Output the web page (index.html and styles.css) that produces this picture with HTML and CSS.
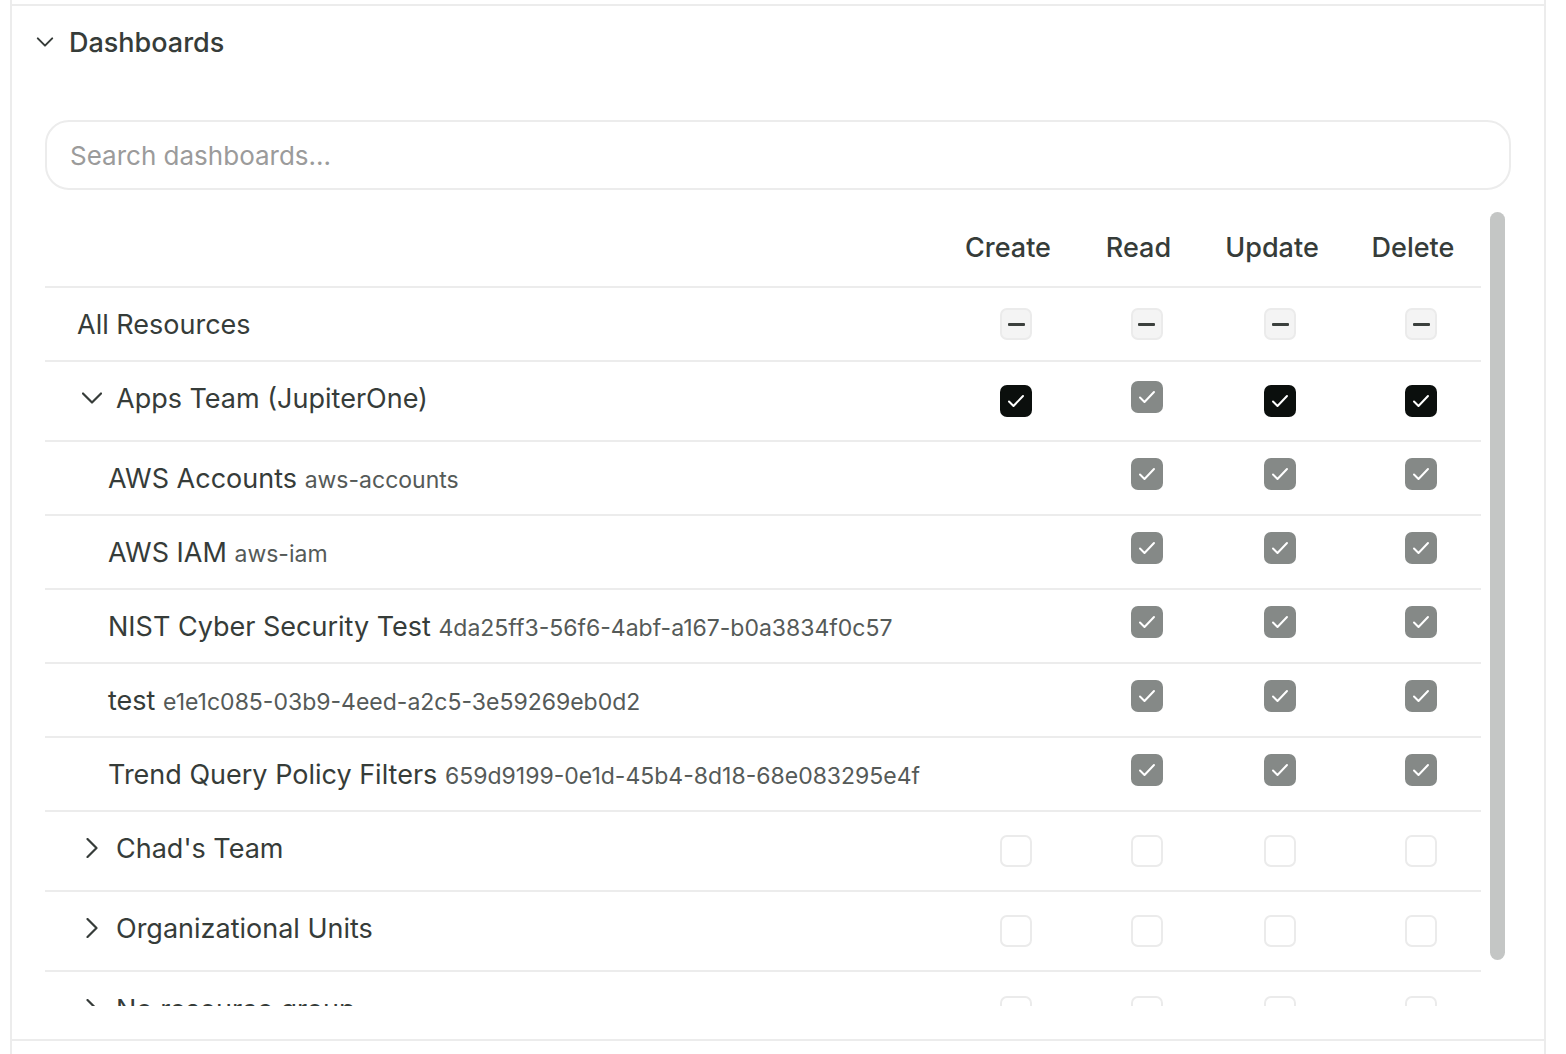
FILE: index.html
```html
<!DOCTYPE html>
<html lang="en">
<head>
    <meta charset="UTF-8">
    <meta name="viewport" content="width=device-width, initial-scale=1.0">
    <title>Dashboards permissions</title>
    <link rel="stylesheet" href="styles.css">
</head>
<body>
    <div class="panel">
        <div class="prev-section"></div>
        <section class="section">
            <div class="section-head">
                <svg class="chevron" width="18" height="18" viewBox="0 0 20 20"><path d="M2 6l8 8 8-8"/></svg>
                <span>Dashboards</span>
            </div>
            <div class="section-body">
                <input class="search" type="text" placeholder="Search dashboards...">

                <div class="table-wrap">
                    <div class="table-scroll">
                        <div class="row row-head">
                            <div></div>
                            <div class="col-head">Create</div>
                            <div class="col-head">Read</div>
                            <div class="col-head">Update</div>
                            <div class="col-head">Delete</div>
                        </div>

                        <div class="row">
                            <div class="name name-root">All Resources</div>
                            <div class="cell"><span class="cb cb-mixed"><i class="dash"></i></span></div>
                            <div class="cell"><span class="cb cb-mixed"><i class="dash"></i></span></div>
                            <div class="cell"><span class="cb cb-mixed"><i class="dash"></i></span></div>
                            <div class="cell"><span class="cb cb-mixed"><i class="dash"></i></span></div>
                        </div>

                        <div class="row row-group">
                            <div class="name name-group">
                                <svg class="chevron" width="20" height="20" viewBox="0 0 20 20"><path d="M1 5.5l9 9 9-9"/></svg>
                                <span>Apps Team (JupiterOne)</span>
                            </div>
                            <div class="cell"><span class="cb cb-on"><svg width="24" height="24" viewBox="0 0 24 24"><path d="M5 12.5l4.5 4.5 9.5-10"/></svg></span></div>
                            <div class="cell"><span class="cb cb-inherit"><svg width="24" height="24" viewBox="0 0 24 24"><path d="M5 12.5l4.5 4.5 9.5-10"/></svg></span></div>
                            <div class="cell"><span class="cb cb-on"><svg width="24" height="24" viewBox="0 0 24 24"><path d="M5 12.5l4.5 4.5 9.5-10"/></svg></span></div>
                            <div class="cell"><span class="cb cb-on"><svg width="24" height="24" viewBox="0 0 24 24"><path d="M5 12.5l4.5 4.5 9.5-10"/></svg></span></div>
                        </div>

                        <div class="row">
                            <div class="name name-child"><span>AWS Accounts <small>aws-accounts</small></span></div>
                            <div class="cell"></div>
                            <div class="cell"><span class="cb cb-inherit"><svg width="24" height="24" viewBox="0 0 24 24"><path d="M5 12.5l4.5 4.5 9.5-10"/></svg></span></div>
                            <div class="cell"><span class="cb cb-inherit"><svg width="24" height="24" viewBox="0 0 24 24"><path d="M5 12.5l4.5 4.5 9.5-10"/></svg></span></div>
                            <div class="cell"><span class="cb cb-inherit"><svg width="24" height="24" viewBox="0 0 24 24"><path d="M5 12.5l4.5 4.5 9.5-10"/></svg></span></div>
                        </div>

                        <div class="row">
                            <div class="name name-child"><span>AWS IAM <small>aws-iam</small></span></div>
                            <div class="cell"></div>
                            <div class="cell"><span class="cb cb-inherit"><svg width="24" height="24" viewBox="0 0 24 24"><path d="M5 12.5l4.5 4.5 9.5-10"/></svg></span></div>
                            <div class="cell"><span class="cb cb-inherit"><svg width="24" height="24" viewBox="0 0 24 24"><path d="M5 12.5l4.5 4.5 9.5-10"/></svg></span></div>
                            <div class="cell"><span class="cb cb-inherit"><svg width="24" height="24" viewBox="0 0 24 24"><path d="M5 12.5l4.5 4.5 9.5-10"/></svg></span></div>
                        </div>

                        <div class="row">
                            <div class="name name-child"><span>NIST Cyber Security Test <small>4da25ff3-56f6-4abf-a167-b0a3834f0c57</small></span></div>
                            <div class="cell"></div>
                            <div class="cell"><span class="cb cb-inherit"><svg width="24" height="24" viewBox="0 0 24 24"><path d="M5 12.5l4.5 4.5 9.5-10"/></svg></span></div>
                            <div class="cell"><span class="cb cb-inherit"><svg width="24" height="24" viewBox="0 0 24 24"><path d="M5 12.5l4.5 4.5 9.5-10"/></svg></span></div>
                            <div class="cell"><span class="cb cb-inherit"><svg width="24" height="24" viewBox="0 0 24 24"><path d="M5 12.5l4.5 4.5 9.5-10"/></svg></span></div>
                        </div>

                        <div class="row">
                            <div class="name name-child"><span>test <small>e1e1c085-03b9-4eed-a2c5-3e59269eb0d2</small></span></div>
                            <div class="cell"></div>
                            <div class="cell"><span class="cb cb-inherit"><svg width="24" height="24" viewBox="0 0 24 24"><path d="M5 12.5l4.5 4.5 9.5-10"/></svg></span></div>
                            <div class="cell"><span class="cb cb-inherit"><svg width="24" height="24" viewBox="0 0 24 24"><path d="M5 12.5l4.5 4.5 9.5-10"/></svg></span></div>
                            <div class="cell"><span class="cb cb-inherit"><svg width="24" height="24" viewBox="0 0 24 24"><path d="M5 12.5l4.5 4.5 9.5-10"/></svg></span></div>
                        </div>

                        <div class="row">
                            <div class="name name-child"><span>Trend Query Policy Filters <small>659d9199-0e1d-45b4-8d18-68e083295e4f</small></span></div>
                            <div class="cell"></div>
                            <div class="cell"><span class="cb cb-inherit"><svg width="24" height="24" viewBox="0 0 24 24"><path d="M5 12.5l4.5 4.5 9.5-10"/></svg></span></div>
                            <div class="cell"><span class="cb cb-inherit"><svg width="24" height="24" viewBox="0 0 24 24"><path d="M5 12.5l4.5 4.5 9.5-10"/></svg></span></div>
                            <div class="cell"><span class="cb cb-inherit"><svg width="24" height="24" viewBox="0 0 24 24"><path d="M5 12.5l4.5 4.5 9.5-10"/></svg></span></div>
                        </div>

                        <div class="row row-group">
                            <div class="name name-group">
                                <svg class="chevron" width="20" height="20" viewBox="0 0 20 20"><path d="M5.5 1l9 9-9 9"/></svg>
                                <span>Chad's Team</span>
                            </div>
                            <div class="cell"><span class="cb cb-off"></span></div>
                            <div class="cell"><span class="cb cb-off"></span></div>
                            <div class="cell"><span class="cb cb-off"></span></div>
                            <div class="cell"><span class="cb cb-off"></span></div>
                        </div>

                        <div class="row row-group">
                            <div class="name name-group">
                                <svg class="chevron" width="20" height="20" viewBox="0 0 20 20"><path d="M5.5 1l9 9-9 9"/></svg>
                                <span>Organizational Units</span>
                            </div>
                            <div class="cell"><span class="cb cb-off"></span></div>
                            <div class="cell"><span class="cb cb-off"></span></div>
                            <div class="cell"><span class="cb cb-off"></span></div>
                            <div class="cell"><span class="cb cb-off"></span></div>
                        </div>

                        <div class="row row-group row-last">
                            <div class="name name-group">
                                <svg class="chevron" width="20" height="20" viewBox="0 0 20 20"><path d="M5.5 1l9 9-9 9"/></svg>
                                <span>No resource group</span>
                            </div>
                            <div class="cell"><span class="cb cb-off"></span></div>
                            <div class="cell"><span class="cb cb-off"></span></div>
                            <div class="cell"><span class="cb cb-off"></span></div>
                            <div class="cell"><span class="cb cb-off"></span></div>
                        </div>
                    </div>
                    <div class="scrollbar"><div class="scrollbar-thumb"></div></div>
                </div>
            </div>
        </section>
    </div>
</body>
</html>
```

FILE: styles.css
```css
html, body {
    margin: 0;
    padding: 0;
    background-color: #ffffff;
}
body {
    font-family: Inter, "Noto Sans", sans-serif;
    color: #363c39;
    overflow: hidden;
}
.panel {
    box-sizing: border-box;
    width: 1536px;
    min-height: 100vh;
    margin-left: 10px;
    border-left: 2px solid #ececec;
    border-right: 2px solid #ececec;
}
.prev-section {
    height: 4px;
}
.section {
    border-top: 2px solid #ececec;
    border-bottom: 2px solid #ececec;
}
.section-head {
    display: flex;
    align-items: center;
    gap: 15px;
    height: 72px;
    padding-left: 24px;
    font-size: 27px;
    font-weight: 500;
}
.chevron {
    flex: none;
    fill: none;
    stroke: #363c39;
    stroke-width: 2.2;
    stroke-linecap: round;
    stroke-linejoin: round;
}
.section-body {
    padding: 42px 33px 33px;
}
.search {
    display: block;
    box-sizing: border-box;
    width: 100%;
    height: 70px;
    margin: 0 0 22px;
    padding: 0 23px;
    border: 2px solid #ececec;
    border-radius: 24px;
    font-family: Inter, "Noto Sans", sans-serif;
    font-size: 26px;
    color: #363c39;
    outline: none;
}
.search::placeholder {
    color: #9b9b9b;
}
.table-wrap {
    display: flex;
    height: 794px;
}
.table-scroll {
    flex: 1;
    overflow: hidden;
}
.scrollbar {
    flex: none;
    width: 30px;
}
.scrollbar-thumb {
    width: 15px;
    height: 748px;
    margin-left: 9px;
    border-radius: 8px;
    background-color: #c4c6c5;
}
.row {
    display: grid;
    grid-template-columns: 1fr 140px 121px 146px 136px;
    box-sizing: border-box;
    height: 74px;
    border-bottom: 2px solid #ececec;
    font-size: 27px;
}
.row-head {
    height: 76px;
    padding-bottom: 4px;
}
.row-group {
    height: 80px;
}
.row-last {
    border-bottom: none;
}
.col-head {
    display: flex;
    align-items: center;
    justify-content: center;
    font-weight: 500;
}
.name {
    display: flex;
    align-items: center;
    white-space: nowrap;
}
.name-root {
    padding-left: 32px;
}
.name-group {
    gap: 14px;
    padding-left: 37px;
    padding-bottom: 6px;
}
.name-child {
    padding-left: 63px;
}
.name small {
    font-size: 23px;
    color: #555a58;
}
.cell {
    display: flex;
    align-items: center;
    justify-content: center;
    padding-left: 16px;
}
.cb {
    display: flex;
    align-items: center;
    justify-content: center;
    box-sizing: border-box;
    width: 32px;
    height: 32px;
    border-radius: 7px;
}
.cb svg {
    fill: none;
    stroke: #ffffff;
    stroke-width: 2;
    stroke-linecap: round;
    stroke-linejoin: round;
}
.cb-on {
    background-color: #0b0f0d;
}
.cb-inherit {
    background-color: #858987;
    margin-bottom: 8px;
}
.cb-off {
    background-color: #ffffff;
    border: 2px solid #ebebeb;
}
.cb-mixed {
    background-color: #f4f4f4;
    border: 2px solid #ebebeb;
}
.dash {
    display: block;
    width: 17px;
    height: 3px;
    border-radius: 1px;
    background-color: #3b403d;
}
```
